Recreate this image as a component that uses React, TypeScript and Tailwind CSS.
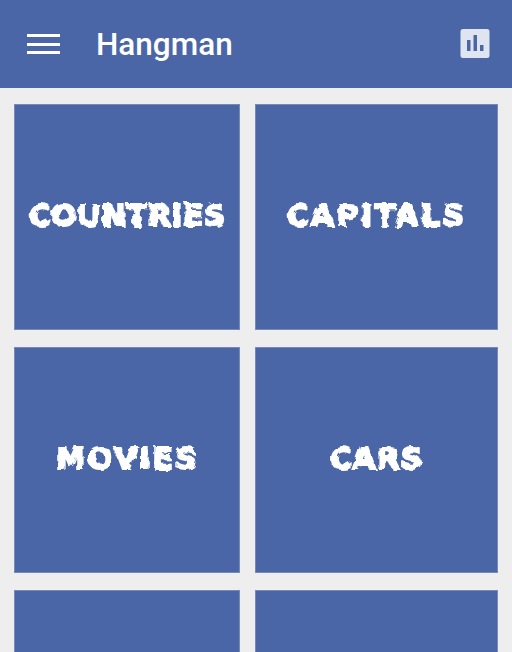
const tiles = [
  { name: "COUNTRIES", spacing: "tracking-[0.4px]" },
  { name: "CAPITALS", spacing: "tracking-[2.5px]" },
  { name: "MOVIES", spacing: "tracking-[2px]" },
  { name: "CARS", spacing: "tracking-[1px]" },
  { name: "", spacing: "" },
  { name: "", spacing: "" },
];

function StatsIcon() {
  return (
    <svg width="30" height="30" viewBox="0 0 30 30" aria-hidden="true">
      <path
        fill="#dfe4f1"
        fillRule="evenodd"
        d="M3 0h24a2.5 2.5 0 0 1 2.5 2.5v24a2.5 2.5 0 0 1-2.5 2.5h-24a2.5 2.5 0 0 1-2.5-2.5v-24a2.5 2.5 0 0 1 2.5-2.5zM7 11v11h3.5v-11zM13.5 6v16h3.5v-16zM20 16v6h3.5v-6z"
      />
    </svg>
  );
}

export default function App() {
  return (
    <div className="h-[652px] overflow-hidden bg-[#eeeeee]">
      <svg width="0" height="0" className="absolute">
        <filter id="rough" x="-5%" y="-25%" width="110%" height="150%">
          <feTurbulence type="fractalNoise" baseFrequency="0.13" numOctaves="2" seed="4" />
          <feDisplacementMap in="SourceGraphic" scale="6" />
          <feGaussianBlur stdDeviation="0.6" />
        </filter>
      </svg>

      <header className="flex h-[88px] items-center bg-[#4a66a6] pl-[27px] pr-[22px] font-['Roboto',sans-serif] text-white">
        <div className="flex h-[20px] w-[33px] flex-col justify-between">
          <span className="h-[3px] bg-white" />
          <span className="h-[3px] bg-white" />
          <span className="h-[3px] bg-white" />
        </div>
        <h1 className="ml-[36px] flex-1 pt-[2px] text-[31.5px] font-medium leading-none">Hangman</h1>
        <StatsIcon />
      </header>

      <main className="grid grid-cols-[226px_243px] gap-x-[15px] gap-y-[17px] pl-[14px] pt-[16px]">
        {tiles.map((tile, i) => (
          <div
            key={i}
            className="flex h-[226px] items-center justify-center border border-[#7689b8] bg-[#4a66a6] pb-[2px]"
          >
            <span
              className={`font-['DejaVu_Sans',sans-serif] text-[30px] font-bold leading-none text-white [-webkit-text-stroke:2px_white] [filter:url(#rough)] ${tile.spacing}`}
            >
              {tile.name}
            </span>
          </div>
        ))}
      </main>
    </div>
  );
}
